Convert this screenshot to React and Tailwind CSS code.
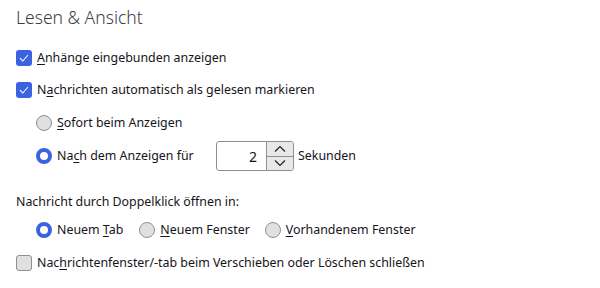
import React from "react";

const font = { fontFamily: '"Noto Sans", "Segoe UI", sans-serif' };

function Check({ checked }) {
  return checked ? (
    <span className="w-4 h-4 rounded-[3px] bg-[#3b62e0] flex items-center justify-center shrink-0">
      <svg width="12" height="12" viewBox="0 0 12 12" fill="none">
        <path d="M2 6.2 L4.8 9 L10 3" stroke="white" strokeWidth="1.1" />
      </svg>
    </span>
  ) : (
    <span className="w-4 h-4 rounded-[3px] bg-[#e0e0e0] border border-[#8f8f8f] shrink-0" />
  );
}

function Radio({ checked, className = "" }) {
  return checked ? (
    <span className={"block w-4 h-4 rounded-full border-[4px] border-[#3b62e0] bg-white shrink-0 " + className} />
  ) : (
    <span className={"block w-4 h-4 rounded-full bg-[#e0e0e0] border border-[#8f8f8f] shrink-0 " + className} />
  );
}

function U({ children }) {
  return <span className="underline underline-offset-2 decoration-1">{children}</span>;
}

export default function App() {
  return (
    <div className="w-[600px] h-[288px] bg-white text-[#15141a] text-[12.4px] overflow-hidden" style={font}>
      <div className="pl-4 pt-[5px]">
        <div className="text-[17.5px] font-light text-[#3d3d3d] leading-[24px]">Lesen &amp; Ansicht</div>
        <div className="mt-[20px] flex items-center gap-[5px] h-[18px]">
          <Check checked />
          <span><U>A</U>nhänge eingebunden anzeigen</span>
        </div>
        <div className="mt-[14px] flex items-center gap-[5px] h-[18px]">
          <Check checked />
          <span>N<U>a</U>chrichten automatisch als gelesen markieren</span>
        </div>
        <div className="pl-[20px]">
          <div className="mt-[15px] flex items-center gap-[5px] h-[18px]">
            <Radio />
            <span><U>S</U>ofort beim Anzeigen</span>
          </div>
          <div className="mt-[9px] flex items-center h-[30px]">
            <Radio checked />
            <span className="ml-[5px] w-[159px]">Na<U>c</U>h dem Anzeigen für</span>
            <div className="flex h-[30px] w-[78px] border border-[#8f8f8f] rounded-[3px] bg-white overflow-hidden">
              <div className="flex-1 flex items-center justify-end pr-[9px] text-[14px]">2</div>
              <div className="w-[27px] flex flex-col border-l border-[#8f8f8f]">
                <div className="flex-1 bg-[#e8e8e8] flex items-center justify-center border-b border-[#8f8f8f]">
                  <svg width="12" height="8" viewBox="0 0 12 8" fill="none"><path d="M1 6.5 L6 1.5 L11 6.5" stroke="#222" strokeWidth="1.2" /></svg>
                </div>
                <div className="flex-1 bg-[#e8e8e8] flex items-center justify-center">
                  <svg width="12" height="8" viewBox="0 0 12 8" fill="none"><path d="M1 1.5 L6 6.5 L11 1.5" stroke="#222" strokeWidth="1.2" /></svg>
                </div>
              </div>
            </div>
            <span className="ml-[4px]">Sekunden</span>
          </div>
        </div>
        <div className="mt-[22px] h-[18px] flex items-center">Nachricht durch Doppelklick öffnen in:</div>
        <div className="pl-[20px] mt-[10px] flex items-center h-[18px]">
          <Radio checked />
          <span className="ml-[5px]">Neuem <U>T</U>ab</span>
          <Radio className="ml-[16px]" />
          <span className="ml-[5px]"><U>N</U>euem Fenster</span>
          <Radio className="ml-[15px]" />
          <span className="ml-[5px]"><U>V</U>orhandenem Fenster</span>
        </div>
        <div className="mt-[15px] flex items-center gap-[5px] h-[18px]">
          <Check />
          <span>Nac<U>h</U>richtenfenster/-tab beim Verschieben oder Löschen schließen</span>
        </div>
      </div>
    </div>
  );
}
